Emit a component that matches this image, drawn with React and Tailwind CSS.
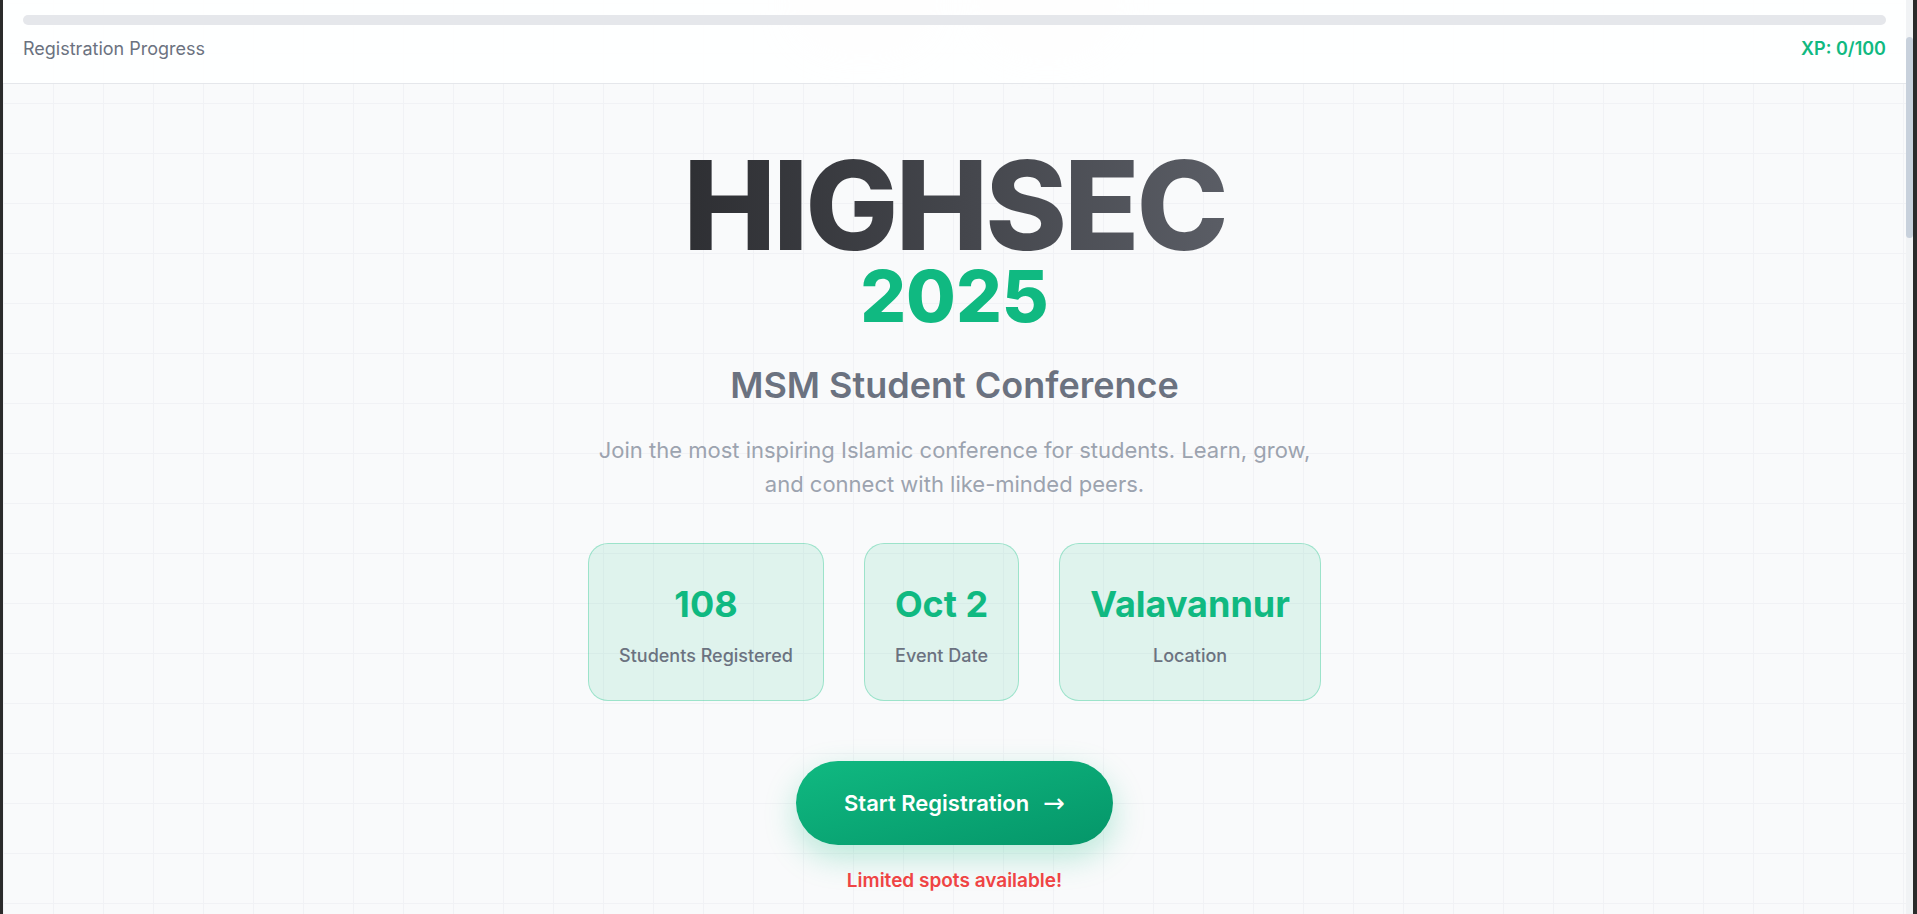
import React from 'react';

const stats = [
  { value: '108', label: 'Students Registered' },
  { value: 'Oct 2', label: 'Event Date' },
  { value: 'Valavannur', label: 'Location' },
];

const App = () => {
  const xp = 0;

  return (
    <div className="flex h-[914px] w-full overflow-hidden bg-[#2b2b2b] pl-[3px] pr-[4px] font-['Inter','Noto_Sans',sans-serif]">
      <div className="relative flex min-w-0 flex-1 flex-col overflow-hidden bg-[#f9fafb] bg-[linear-gradient(to_right,#f1f2f5_1px,transparent_1px),linear-gradient(to_bottom,#f1f2f5_1px,transparent_1px)] bg-[size:50px_50px] bg-[position:0_3px]">
        {/* soft blobs behind the header */}
        <div className="pointer-events-none absolute left-[990px] top-[-40px] h-[80px] w-[110px] rounded-full bg-[#eef0f2] opacity-40 blur-xl" />
        <div className="pointer-events-none absolute left-[800px] top-[-30px] h-[70px] w-[120px] rounded-full bg-[#eef0f2] opacity-30 blur-xl" />

        {/* Progress header */}
        <header className="relative z-10 border-b border-[#e5e7eb] bg-white/90 px-5 pt-[15px] pb-5">
          <div className="h-2.5 w-full overflow-hidden rounded-full bg-[#e5e7eb]">
            <div className="h-full rounded-full bg-emerald-500" style={{ width: `${xp}%` }} />
          </div>
          <div className="mt-2.5 flex items-center justify-between text-lg leading-7">
            <span className="text-[#6b7280]">Registration Progress</span>
            <span className="font-semibold text-[#10b981]">XP: {xp}/100</span>
          </div>
        </header>

        {/* Hero */}
        <main className="relative z-10 flex flex-col items-center pt-[63px] text-center">
          <h1 className="bg-gradient-to-r from-[#2e2f33] to-[#5a5d65] bg-clip-text text-[124px] font-extrabold leading-[116px] tracking-tight text-transparent">
            HIGHSEC
          </h1>
          <div className="mt-px text-7xl font-extrabold leading-[64px] text-[#10b981]">2025</div>

          <h2 className="mt-[37px] text-4xl font-semibold leading-10 text-[#6b7280]">MSM Student Conference</h2>

          <p className="mt-7 max-w-[745px] text-[22px] leading-[34px] text-[#9ca3af]">
            Join the most inspiring Islamic conference for students. Learn, grow, and connect with like-minded peers.
          </p>

          <div className="mt-[42px] flex gap-10">
            {stats.map((s) => (
              <div
                key={s.label}
                className="rounded-[20px] border border-emerald-500/30 bg-emerald-500/10 px-[30px] pt-10 pb-[30px]"
              >
                <div className="text-4xl font-bold leading-10 text-[#10b981]">{s.value}</div>
                <div className="mt-[18px] text-lg font-medium leading-7 text-[#6b7280]">{s.label}</div>
              </div>
            ))}
          </div>

          <button
            type="button"
            className="mt-15 flex items-center gap-[14px] rounded-full bg-gradient-to-br from-[#10b981] to-[#059669] px-12 py-7 text-[22px] font-semibold leading-7 text-white shadow-[0_12px_32px_rgba(16,185,129,0.28)]"
          >
            <span>Start Registration</span>
            <span className="font-['DejaVu_Sans',sans-serif] text-[26px] font-normal leading-7">→</span>
          </button>

          <p className="mt-[22px] text-[19px] font-semibold leading-7 text-[#ef4444]">Limited spots available!</p>
        </main>
      </div>

      {/* scrollbar */}
      <div className="flex w-[7px] flex-col bg-[#f1f3f5] pt-[37px]">
        <div className="h-[201px] w-full rounded-full bg-[#c8d1dc]" />
      </div>
    </div>
  );
};

export default App;
